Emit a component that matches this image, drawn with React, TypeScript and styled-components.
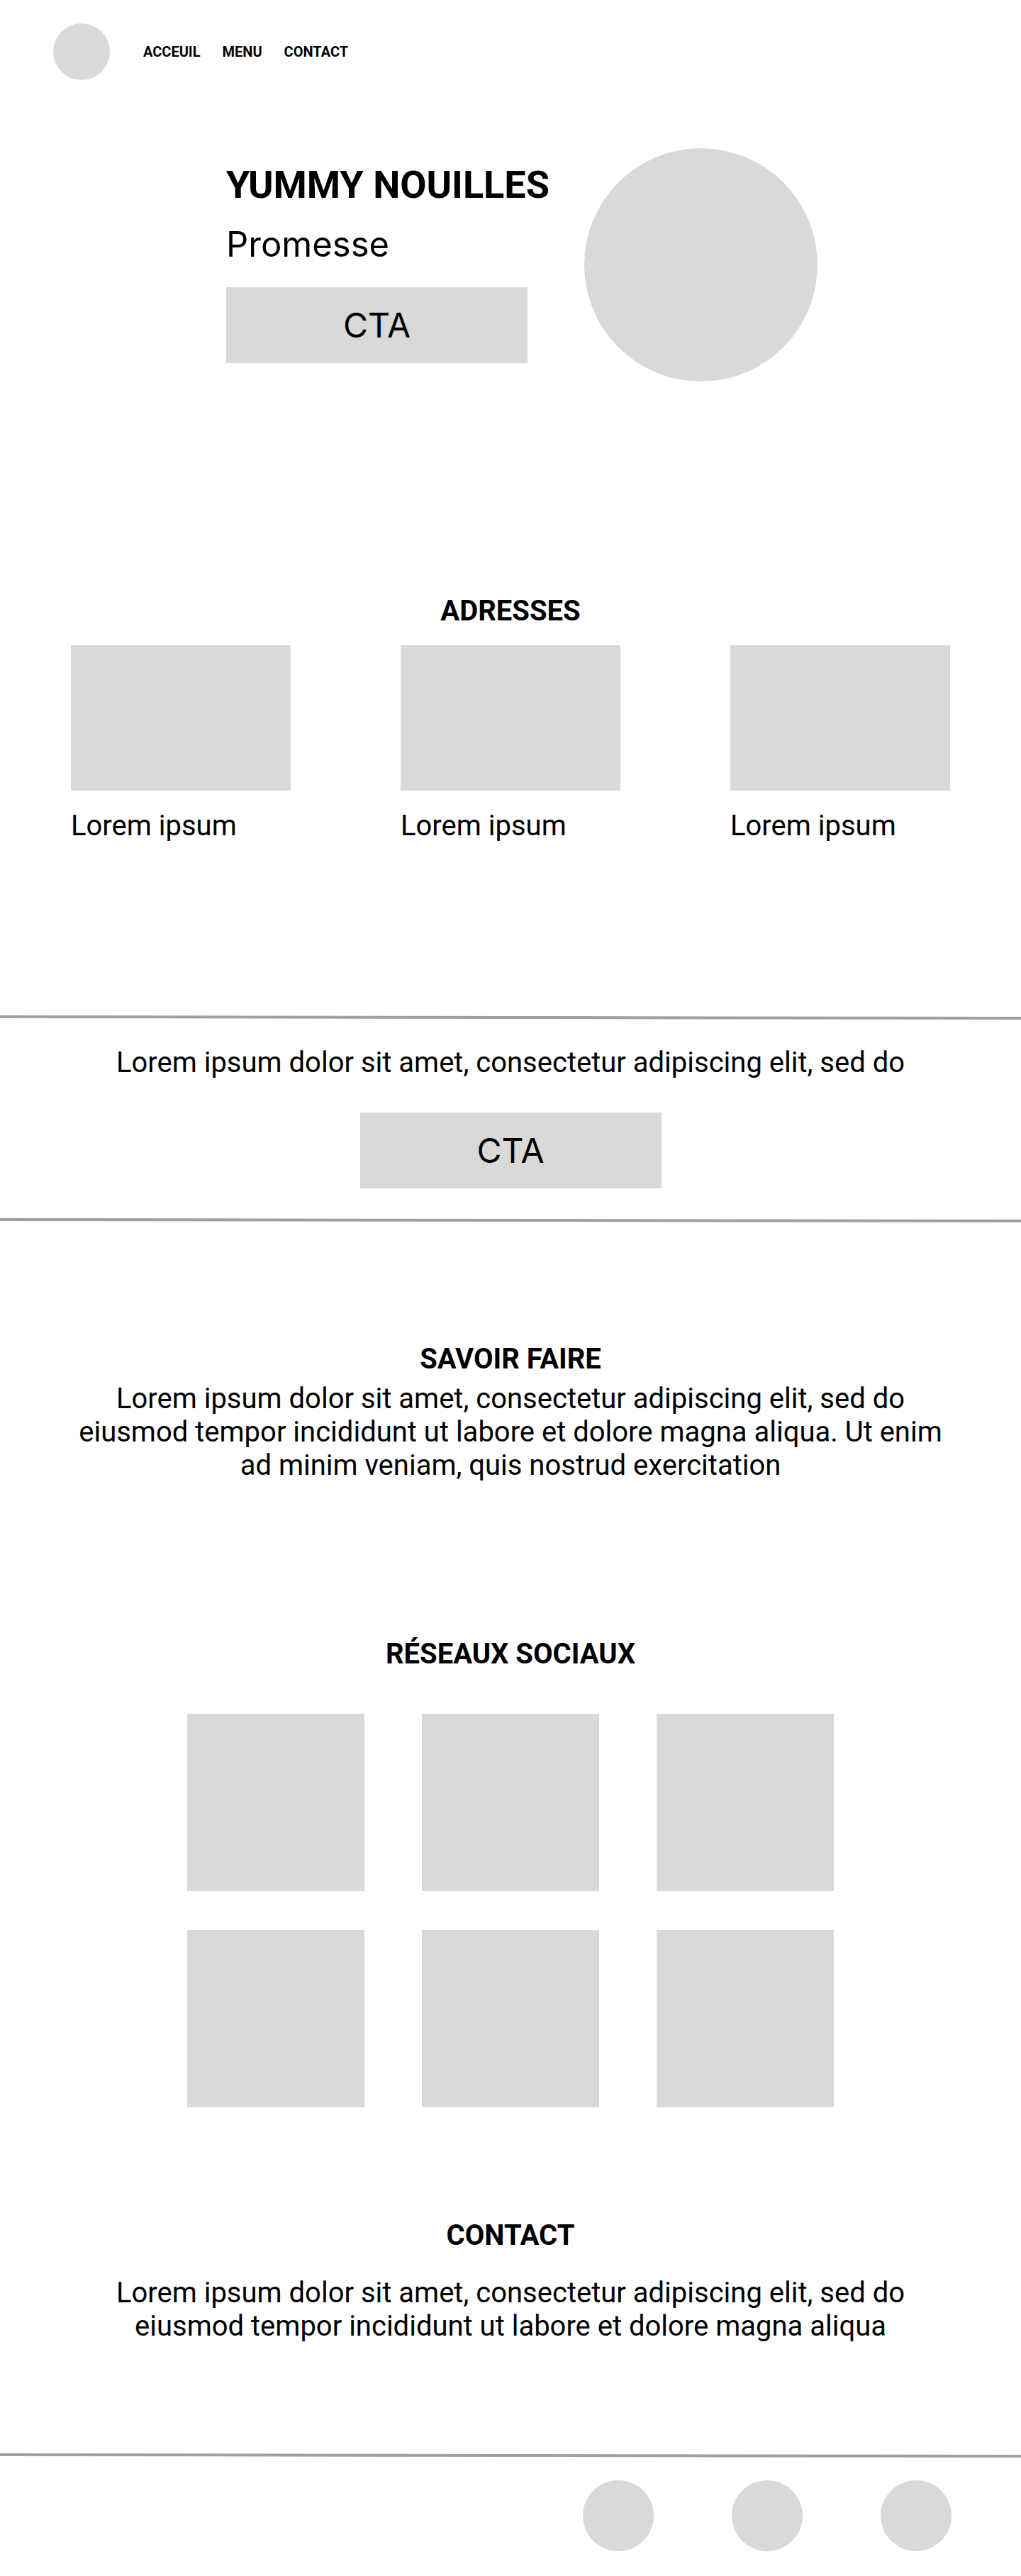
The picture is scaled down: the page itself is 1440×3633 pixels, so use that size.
import * as React from 'react';
import styled, {createGlobalStyle} from 'styled-components';

const GlobalStyle = createGlobalStyle`
    body {
        margin: 0;
        background: #ffffff;
        color: #000000;
        font-family: Roboto, "Liberation Sans", Arial, sans-serif;
    }
`;

const placeholder = '#d9d9d9';

const Page = styled.div`
    width: 1440px;
    padding-bottom: 32px;
    overflow: hidden;
`;

const Header = styled.header`
    display: flex;
    align-items: center;
    gap: 47px;
    padding: 33px 0 0 75px;
`;

const Circle = styled.div<{ $size: number }>`
    width: ${p => p.$size}px;
    height: ${p => p.$size}px;
    border-radius: 50%;
    background: ${placeholder};
    flex-shrink: 0;
`;

const Nav = styled.nav`
    display: flex;
    gap: 31px;
`;

const NavLink = styled.a`
    font-size: 20px;
    font-weight: 700;
    line-height: 23px;
    color: #000000;
    text-decoration: none;
`;

const Hero = styled.section`
    display: flex;
    align-items: flex-start;
    margin-top: 96px;
    padding-left: 319px;
`;

const HeroText = styled.div`
    width: 505px;
    padding-top: 20px;
    display: flex;
    flex-direction: column;
    align-items: flex-start;
`;

const HeroTitle = styled.h1`
    margin: 0;
    font-size: 54px;
    font-weight: 700;
    line-height: 63px;
`;

const Promise = styled.p`
    margin: 23px 0 0;
    font-family: Inter, Roboto, sans-serif;
    font-size: 49px;
    font-weight: 400;
    line-height: 59px;
`;

const CtaButton = styled.button<{ $top: number; $center?: boolean }>`
    display: block;
    width: 425px;
    height: 107px;
    margin: ${p => p.$top}px ${p => (p.$center ? 'auto' : '0')} 0;
    border: none;
    background: ${placeholder};
    font-family: Inter, Roboto, sans-serif;
    font-size: 48px;
    font-weight: 400;
    color: #000000;
    padding: 0;
`;

const Section = styled.section<{ $top: number }>`
    margin-top: ${p => p.$top}px;
`;

const SectionTitle = styled.h2`
    margin: 0;
    text-align: center;
    font-size: 40px;
    font-weight: 700;
    line-height: 47px;
`;

const AddressGrid = styled.div`
    display: grid;
    grid-template-columns: repeat(3, 310px);
    justify-content: space-between;
    padding: 0 100px;
    margin-top: 25px;
`;

const Thumb = styled.div`
    width: 310px;
    height: 205px;
    background: ${placeholder};
`;

const Caption = styled.p`
    margin: 26px 0 0;
    font-size: 40px;
    line-height: 47px;
`;

const Divider = styled.hr<{ $top: number }>`
    margin: ${p => p.$top}px 0 0;
    border: none;
    height: 4px;
    background: #a0a0a0;
    transform: rotate(0.08deg);
`;

const BodyText = styled.p<{ $top: number }>`
    max-width: 1240px;
    margin: ${p => p.$top}px auto 0;
    text-align: center;
    font-size: 40px;
    line-height: 47px;
`;

const SocialGrid = styled.div`
    display: grid;
    grid-template-columns: repeat(3, 250px);
    column-gap: 81px;
    row-gap: 55px;
    justify-content: center;
    margin-top: 61px;
`;

const SocialTile = styled.div`
    width: 250px;
    height: 250px;
    background: ${placeholder};
`;

const Footer = styled.footer`
    display: flex;
    justify-content: flex-end;
    gap: 110px;
    padding-right: 98px;
    margin-top: 33px;
`;

const lorem = 'Lorem ipsum dolor sit amet, consectetur adipiscing elit, sed do';

export default function App() {
    return (
        <Page>
            <GlobalStyle/>
            <Header>
                <Circle $size={80}/>
                <Nav>
                    <NavLink href="#">ACCEUIL</NavLink>
                    <NavLink href="#">MENU</NavLink>
                    <NavLink href="#">CONTACT</NavLink>
                </Nav>
            </Header>

            <Hero>
                <HeroText>
                    <HeroTitle>YUMMY NOUILLES</HeroTitle>
                    <Promise>Promesse</Promise>
                    <CtaButton $top={31}>CTA</CtaButton>
                </HeroText>
                <Circle $size={329}/>
            </Hero>

            <Section $top={300}>
                <SectionTitle>ADRESSES</SectionTitle>
                <AddressGrid>
                    {[0, 1, 2].map(i => (
                        <div key={i}>
                            <Thumb/>
                            <Caption>Lorem ipsum</Caption>
                        </div>
                    ))}
                </AddressGrid>
            </Section>

            <Divider $top={245}/>
            <BodyText $top={38}>{lorem}</BodyText>
            <CtaButton $top={47} $center>CTA</CtaButton>
            <Divider $top={43}/>

            <Section $top={170}>
                <SectionTitle>SAVOIR FAIRE</SectionTitle>
                <BodyText $top={9}>
                    {lorem} eiusmod tempor incididunt ut labore et dolore magna aliqua. Ut enim ad minim veniam, quis nostrud exercitation
                </BodyText>
            </Section>

            <Section $top={219}>
                <SectionTitle>RÉSEAUX SOCIAUX</SectionTitle>
                <SocialGrid>
                    {[0, 1, 2, 3, 4, 5].map(i => <SocialTile key={i}/>)}
                </SocialGrid>
            </Section>

            <Section $top={157}>
                <SectionTitle>CONTACT</SectionTitle>
                <BodyText $top={34}>
                    {lorem} eiusmod tempor incididunt ut labore et dolore magna aliqua
                </BodyText>
            </Section>

            <Divider $top={157}/>
            <Footer>
                <Circle $size={100}/>
                <Circle $size={100}/>
                <Circle $size={100}/>
            </Footer>
        </Page>
    );
}
